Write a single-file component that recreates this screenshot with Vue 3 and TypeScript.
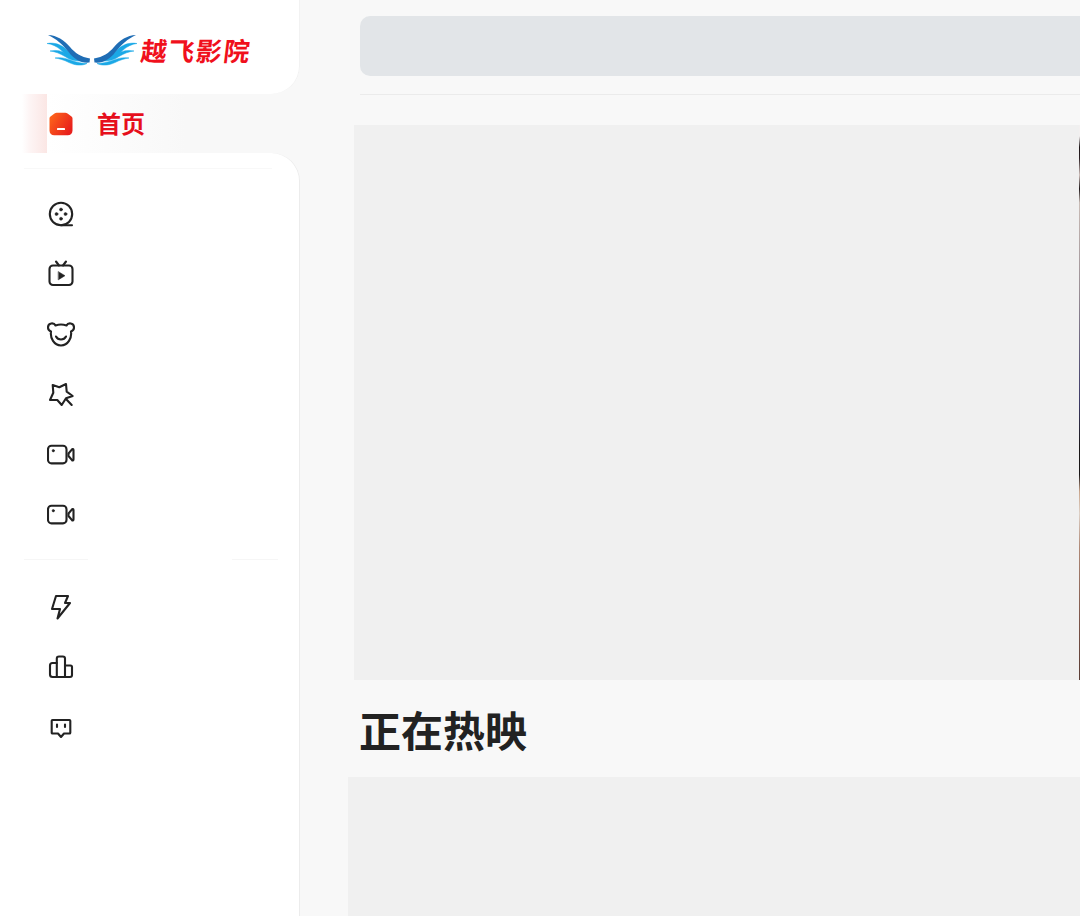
<script setup lang="ts">
const primaryIcons: string[] = ['film', 'tv', 'bear', 'star', 'cam', 'cam']
const secondaryIcons: string[] = ['bolt', 'rank', 'chat']
</script>

<template>
  <div class="page">
    <aside class="sidebar">
      <div class="brand">
        <svg class="wings" width="92" height="34" viewBox="0 0 92 34" aria-hidden="true">
          <g>
            <path class="light" d="M1 10.500C9 9 16 12 21 17C26 22 29 24 33 26C26 26 20 22 15 17C11 13.500 6 11 1 10.500Z" />
            <path class="light" d="M4 18C11 16.500 17 18 23 22C28 25.500 34 27 39 27.500C32 29 25 27.500 19 23.500C14 20.500 9 18.500 4 18Z" />
            <path class="light" d="M9 25C15 24 21 25.500 27 28C31 29.500 37 30.500 41 30.500C36 33 29 32.500 23 29.500C18 27 13 25.500 9 25Z" />
            <path class="dark" d="M2 2C11 2.500 18 7 24 14C29 20 35 24 44 25.500L43.500 29.500C35 30.500 28 26 23 19.500C17 12 10 5.500 2 2Z" />
          </g>
          <g transform="translate(92 0) scale(-1 1)">
            <path class="light" d="M1 10.500C9 9 16 12 21 17C26 22 29 24 33 26C26 26 20 22 15 17C11 13.500 6 11 1 10.500Z" />
            <path class="light" d="M4 18C11 16.500 17 18 23 22C28 25.500 34 27 39 27.500C32 29 25 27.500 19 23.500C14 20.500 9 18.500 4 18Z" />
            <path class="light" d="M9 25C15 24 21 25.500 27 28C31 29.500 37 30.500 41 30.500C36 33 29 32.500 23 29.500C18 27 13 25.500 9 25Z" />
            <path class="dark" d="M2 2C11 2.500 18 7 24 14C29 20 35 24 44 25.500L43.500 29.500C35 30.500 28 26 23 19.500C17 12 10 5.500 2 2Z" />
          </g>
        </svg>
        <span class="brand-name">越飞影院</span>
      </div>

      <div class="active-row">
        <span class="glow"></span>
        <svg class="home" width="24" height="24" viewBox="0 0 24 24" aria-hidden="true">
          <defs>
            <linearGradient id="homeFill" x1="0" y1="0" x2="1" y2="0.600">
              <stop offset="0" stop-color="#ff6a1a" />
              <stop offset="1" stop-color="#e8201c" />
            </linearGradient>
          </defs>
          <path fill="url(#homeFill)" d="M0.500 6.500C0.500 5.500 1 4.800 1.800 4.300L5.500 1.500C6.200 1 6.800 0.800 7.700 0.800H16.300C17.200 0.800 17.800 1 18.500 1.500L22.200 4.300C23 4.800 23.500 5.500 23.500 6.500V18.500C23.500 21.500 21.500 23.300 18.800 23.300H5.200C2.500 23.300 0.500 21.500 0.500 18.500Z" />
          <rect x="8" y="16" width="8" height="2" rx="0.600" fill="#fff" />
        </svg>
        <span class="active-label">首页</span>
      </div>

      <nav class="menu">
        <div class="rule-full"></div>
        <ul class="group">
          <li v-for="(icon, i) in primaryIcons" :key="i" class="item">
            <svg width="28" height="28" viewBox="0 0 28 28" fill="none" class="icon" aria-hidden="true">
              <template v-if="icon === 'film'">
                <circle cx="14" cy="14" r="11.200" />
                <path d="M14 25.200H25" />
                <circle class="dot" cx="14" cy="9.500" r="1.500" />
                <circle class="dot" cx="9.500" cy="14" r="1.500" />
                <circle class="dot" cx="18.500" cy="14" r="1.500" />
                <circle class="dot" cx="14" cy="18.700" r="1.500" />
              </template>
              <template v-else-if="icon === 'tv'">
                <rect x="2.500" y="5.500" width="23" height="19.500" rx="3.500" />
                <path d="M9 1.500L12 5.500M19 1.500L16 5.500" />
                <path class="dot" d="M11.500 11.700L18 15.700L11.500 19.700Z" />
              </template>
              <template v-else-if="icon === 'bear'">
                <path d="M8.500 5.500C12 4.300 16 4.300 19.500 5.500C21 2.500 27 2.500 27 7.500C27 9.500 25.500 11 24 11.500C25 18 21 25.500 14 25.500C7 25.500 3 18 4 11.500C2.500 11 1 9.500 1 7.500C1 2.500 7 2.500 8.500 5.500Z" />
                <path d="M9 16.500C11 20.500 17 20.500 19 16.500" />
              </template>
              <template v-else-if="icon === 'star'">
                <path d="M5.700 4L12.300 6.300L19 3L19.700 10.700L25.700 15L19 17.300L14.700 24L10.300 19L3 19L6.300 11.700Z" />
                <path d="M19 18L24.700 24" />
              </template>
              <template v-else-if="icon === 'cam'">
                <rect x="1" y="4.800" width="18.500" height="17.600" rx="3.500" />
                <path d="M21.500 12.500L25 8.300C25.500 7.800 26.500 8 26.500 9V18.500C26.500 19.500 25.500 19.700 25 19.200L21.500 15Z" />
                <circle class="dot" cx="6.300" cy="9.700" r="1.200" />
              </template>
            </svg>
          </li>
        </ul>
        <div class="rule-split"><span class="seg-a"></span><span class="seg-b"></span></div>
        <ul class="group group-second">
          <li v-for="(icon, i) in secondaryIcons" :key="i" class="item">
            <svg width="28" height="28" viewBox="0 0 28 28" fill="none" class="icon" aria-hidden="true">
              <template v-if="icon === 'bolt'">
                <path d="M9 3H21L18 10H23L10.500 25.500L13 16H5Z" />
              </template>
              <template v-else-if="icon === 'rank'">
                <path d="M9.800 24H5.500C4 24 3 23 3 21.500V12.500C3 11 4 10 5.500 10H9.800" />
                <path d="M9.800 24V5.500C9.800 4 10.800 3.500 12 3.500H15.800C17 3.500 18 4 18 5.500V24" />
                <path d="M9.800 24H23C24.500 24 25 23 25 22V14C25 13 24.500 12.500 23.500 12.500H18" />
              </template>
              <template v-else-if="icon === 'chat'">
                <path d="M5.500 6H22.500C23 6 23.300 6.300 23.300 6.800V18.700C23.300 19.200 23 19.500 22.500 19.500H17L14 23L11 19.500H5.500C5 19.500 4.700 19.200 4.700 18.700V6.800C4.700 6.300 5 6 5.500 6Z" />
                <path d="M10 10.500V13M18 10.500V13" />
              </template>
            </svg>
          </li>
        </ul>
      </nav>
    </aside>

    <main class="main">
      <div class="topbar">
        <div class="search"></div>
      </div>
      <section class="banner">
        <div class="banner-fill"></div>
        <div class="banner-edge"></div>
      </section>
      <h2 class="title">正在热映</h2>
      <div class="cards"></div>
    </main>
  </div>
</template>

<style>
html,
body {
  margin: 0;
  background: #f8f8f8;
}
</style>

<style scoped>
.page {
  display: flex;
  width: 1080px;
  height: 916px;
  overflow: hidden;
  background: #f8f8f8;
  font-family: "Noto Sans CJK SC", "Liberation Sans", sans-serif;
}

.sidebar {
  flex: none;
  display: flex;
  flex-direction: column;
  width: 300px;
}

.brand {
  display: flex;
  align-items: center;
  gap: 3px;
  box-sizing: border-box;
  height: 94px;
  padding: 0 0 0 46px;
  background: #fff;
  border-bottom-right-radius: 28px;
  box-shadow: inset -1px 0 0 #f2f2f2;
}

.wings {
  margin-top: 6px;
}

.light {
  fill: #1ba8e6;
  stroke: #1ba8e6;
  stroke-width: 0.500;
}

.dark {
  fill: #1f6db5;
}

.brand-name {
  display: inline-block;
  color: #f0101c;
  font-size: 26px;
  line-height: 30px;
  font-weight: 700;
  letter-spacing: 1.600px;
  margin-top: 6px;
  transform: skewX(-7deg);
}

.active-row {
  display: flex;
  align-items: center;
  height: 59px;
  background: linear-gradient(90deg, #fff 0, #fff 16%, #f8f8f8 62%);
}

.glow {
  align-self: stretch;
  width: 25px;
  margin-left: 22px;
  background: linear-gradient(90deg, rgba(250, 226, 226, 0), rgba(250, 226, 226, 0.350) 30%, #fbe6e4);
}

.home {
  margin-left: 2px;
}

.active-label {
  margin-left: 24px;
  margin-top: -2px;
  color: #e60f1c;
  font-size: 24px;
  line-height: 32px;
  font-weight: 700;
}

.menu {
  flex: 1;
  background: #fff;
  border-top-right-radius: 28px;
  box-shadow: inset -1px 0 0 #ececec;
  padding-top: 15px;
}

.rule-full {
  height: 1px;
  margin: 0 28px 0 24px;
  background: #f8f8f8;
}

.group {
  display: flex;
  flex-direction: column;
  margin: 15px 0 0;
  padding: 0;
  list-style: none;
}

.group-second {
  margin-top: 17px;
}

.item {
  display: flex;
  align-items: center;
  height: 60.200px;
  padding-left: 47px;
}

.icon {
  stroke: #222;
  stroke-width: 2.100;
  stroke-linecap: round;
  stroke-linejoin: round;
}

.dot {
  fill: #222;
  stroke-width: 0.500;
}

.rule-split {
  display: flex;
  justify-content: space-between;
  height: 1px;
  margin: 14px 22px 0 24px;
}

.seg-a {
  width: 64px;
  background: #f6f6f6;
}

.seg-b {
  width: 46px;
  background: #f6f6f6;
}

.main {
  flex: none;
  width: 780px;
  overflow: hidden;
}

.topbar {
  box-sizing: border-box;
  height: 95px;
  margin-left: 60px;
  padding-top: 16px;
  border-bottom: 1px solid #ebebeb;
}

.search {
  width: 800px;
  height: 60px;
  border-radius: 10px;
  background: #e2e5e8;
}

.banner {
  display: flex;
  height: 555px;
  margin: 30px 0 0 54px;
}

.banner-fill {
  flex: none;
  width: 725px;
  background: #f0f0f0;
}

.banner-edge {
  flex: none;
  width: 1px;
  background: linear-gradient(
    180deg,
    #f3f0f0 0,
    #f3f0f0 2%,
    #1c1416 4%,
    #2a1e22 6%,
    #cdbdb9 9%,
    #1d1618 11.500%,
    #c9bcb6 14%,
    #9a8f96 30%,
    #4e4a72 46%,
    #3c3a66 50%,
    #1a1718 58%,
    #1a1718 63%,
    #c9a58c 66%,
    #ddd0c6 70%,
    #b08a78 76%,
    #7a5348 90%,
    #5a3c34 100%
  );
}

.title {
  margin: 0 0 0 59px;
  height: 97px;
  color: #222;
  font-size: 42px;
  line-height: 98px;
  font-weight: 700;
}

.cards {
  height: 200px;
  margin-left: 48px;
  background: #f0f0f0;
}
</style>
